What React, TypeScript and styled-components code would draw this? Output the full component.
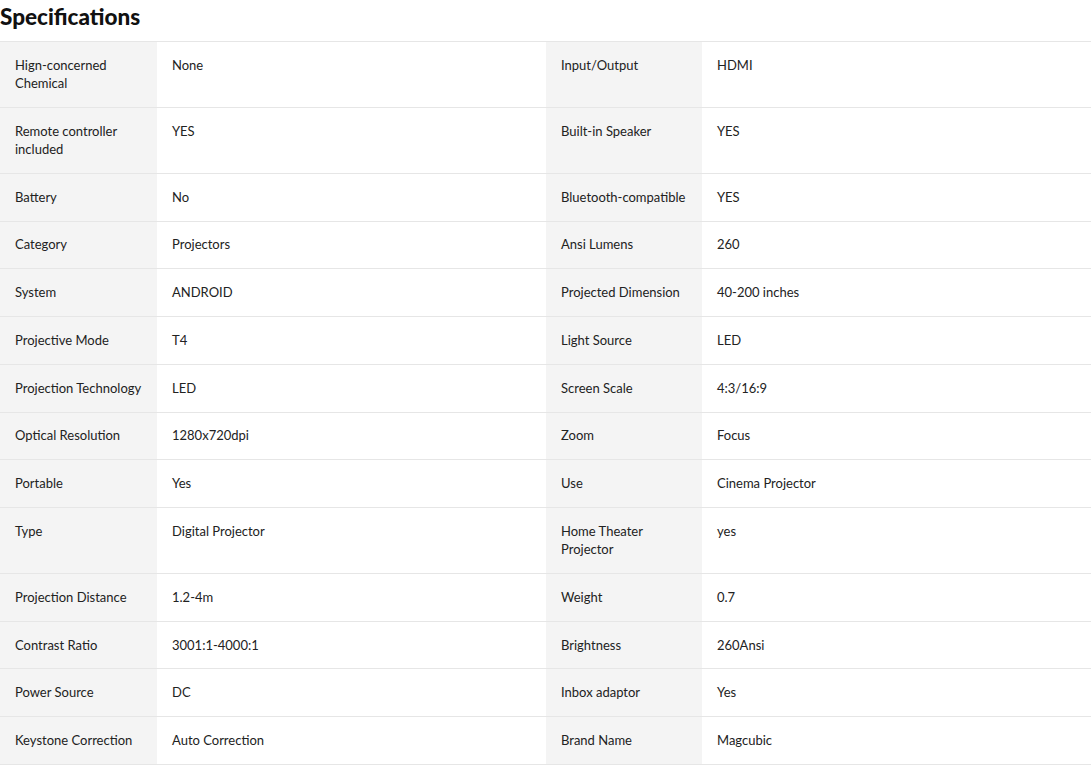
import React from "react";
import styled, { createGlobalStyle } from "styled-components";

const GlobalStyle = createGlobalStyle`
  html, body {
    margin: 0;
    padding: 0;
    background: #ffffff;
  }
  body {
    font-family: Lato, "Noto Sans", sans-serif;
    color: #222222;
  }
`;

type Spec = [string, string];

const specs: [Spec, Spec][] = [
  [["Hign-concerned Chemical", "None"], ["Input/Output", "HDMI"]],
  [["Remote controller included", "YES"], ["Built-in Speaker", "YES"]],
  [["Battery", "No"], ["Bluetooth-compatible", "YES"]],
  [["Category", "Projectors"], ["Ansi Lumens", "260"]],
  [["System", "ANDROID"], ["Projected Dimension", "40-200 inches"]],
  [["Projective Mode", "T4"], ["Light Source", "LED"]],
  [["Projection Technology", "LED"], ["Screen Scale", "4:3/16:9"]],
  [["Optical Resolution", "1280x720dpi"], ["Zoom", "Focus"]],
  [["Portable", "Yes"], ["Use", "Cinema Projector"]],
  [["Type", "Digital Projector"], ["Home Theater Projector", "yes"]],
  [["Projection Distance", "1.2-4m"], ["Weight", "0.7"]],
  [["Contrast Ratio", "3001:1-4000:1"], ["Brightness", "260Ansi"]],
  [["Power Source", "DC"], ["Inbox adaptor", "Yes"]],
  [["Keystone Correction", "Auto Correction"], ["Brand Name", "Magcubic"]],
];

const Section = styled.section`
  width: 1091px;
`;

const Title = styled.h2`
  margin: 0 0 8px;
  font-size: 22.5px;
  line-height: 33px;
  font-weight: 900;
  color: #111111;
`;

const Table = styled.table`
  width: 100%;
  border-collapse: collapse;
  table-layout: fixed;
  border-top: 1px solid #e6e6e6;
`;

const Col = styled.col<{ $w: number }>`
  width: ${(p) => p.$w}px;
`;

const Row = styled.tr`
  border-bottom: 1px solid #e6e6e6;
`;

const Cell = styled.td<{ $label?: boolean }>`
  padding: 13.8px 10px 14.66px 15px;
  vertical-align: top;
  font-size: 13px;
  line-height: 18.27px;
  background: ${(p) => (p.$label ? "#f4f4f4" : "#ffffff")};
  color: #222222;
`;

export default function App() {
  return (
    <>
      <GlobalStyle />
      <Section>
        <Title>Specifications</Title>
        <Table>
          <colgroup>
            <Col $w={157} />
            <Col $w={389} />
            <Col $w={156} />
            <Col $w={389} />
          </colgroup>
          <tbody>
            {specs.map(([left, right]) => (
              <Row key={left[0]}>
                <Cell $label>{left[0]}</Cell>
                <Cell>{left[1]}</Cell>
                <Cell $label>{right[0]}</Cell>
                <Cell>{right[1]}</Cell>
              </Row>
            ))}
          </tbody>
        </Table>
      </Section>
    </>
  );
}
